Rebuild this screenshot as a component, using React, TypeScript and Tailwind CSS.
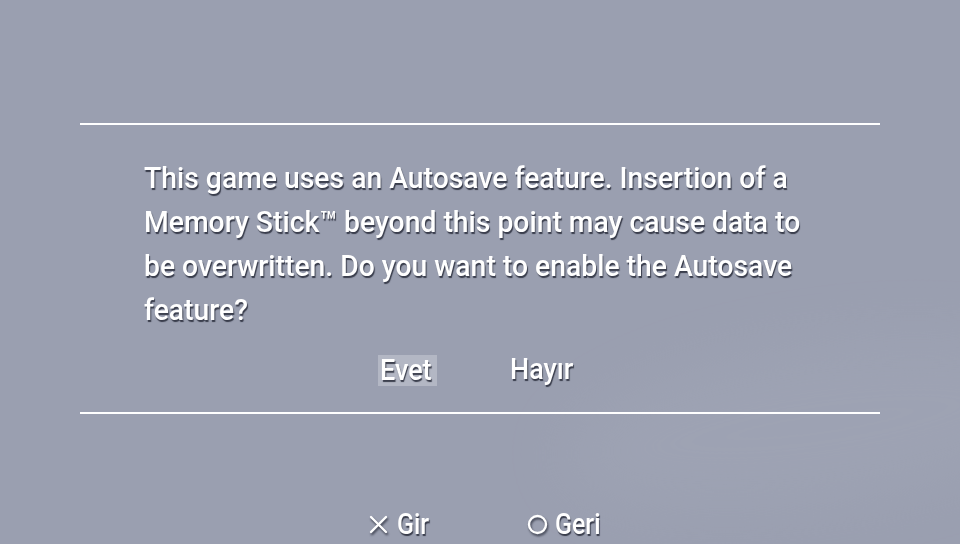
import React from "react";

const shadow = "[text-shadow:1px_2px_1px_rgba(40,44,58,0.85)]";
const body = "inline-block origin-left scale-x-[0.944] text-[30px] font-medium";
const btn = "inline-block origin-left scale-x-[0.9] text-[30px] font-medium";
const foot = "inline-block origin-left scale-x-[0.86] text-[29px] font-medium";

export default function App() {
  const lines = [
    "This game uses an Autosave feature. Insertion of a",
    "Memory Stick\u2122 beyond this point may cause data to",
    "be overwritten. Do you want to enable the Autosave",
    "feature?",
  ];

  return (
    <div
      className="relative w-[960px] h-[544px] overflow-hidden bg-[#9a9fb0] text-white"
      style={{ fontFamily: "Roboto, 'Liberation Sans', sans-serif" }}
    >
      {/* faint background swoosh */}
      <div className="absolute right-[-120px] bottom-[40px] w-[520px] h-[160px] rounded-[50%] bg-[#a3a8b8] opacity-40 blur-[30px] rotate-[-8deg]" />

      <div className="relative flex flex-col">
        <div className="h-[123px]" />
        <div className="mx-[80px] h-[2px] bg-white" />

        <div className="pt-[31px] pl-[144px]">
          {lines.map((l) => (
            <div key={l} className="h-[44px] leading-[44px] whitespace-nowrap">
              <span className={`${body} ${shadow}`}>{l}</span>
            </div>
          ))}
        </div>

        <div className="flex items-center pl-[378px] mt-[23px] h-[31px]">
          <div className="h-[31px] w-[59px] bg-[#b3b7c4] pl-[2px] leading-[29px]">
            <span className={`${btn} ${shadow}`}>Evet</span>
          </div>
          <div className="ml-[73px] leading-[29px]">
            <span className={`${btn} ${shadow}`}>Hayır</span>
          </div>
        </div>

        <div className="mt-[26px] mx-[80px] h-[2px] bg-white" />

        <div className="flex items-center pl-[369px] mt-[93px] h-[34px]">
          <svg width="19" height="19" viewBox="0 0 19 19" className="drop-shadow-[1px_2px_1px_rgba(40,44,58,0.85)]">
            <path d="M2 2 L17 17 M17 2 L2 17" stroke="white" strokeWidth="2.4" strokeLinecap="round" />
          </svg>
          <span className={`ml-[9px] leading-[34px] ${foot} ${shadow}`}>Gir</span>
          <svg width="21" height="21" viewBox="0 0 21 21" className="ml-[93px] drop-shadow-[1px_2px_1px_rgba(40,44,58,0.85)]">
            <circle cx="10.5" cy="10.5" r="8.5" stroke="white" strokeWidth="2.4" fill="none" />
          </svg>
          <span className={`ml-[7px] leading-[34px] ${foot} ${shadow}`}>Geri</span>
        </div>
      </div>
    </div>
  );
}
